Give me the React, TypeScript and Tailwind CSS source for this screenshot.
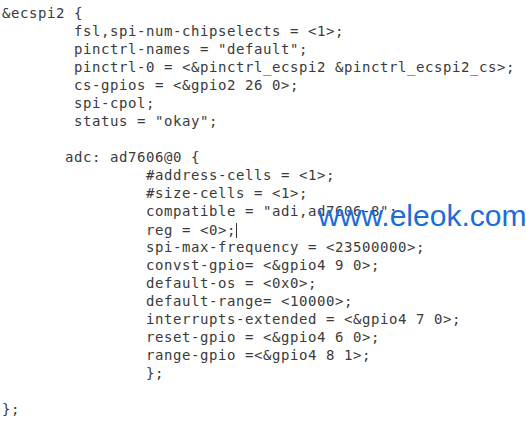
const lines: string[] = [
  "&ecspi2 {",
  "        fsl,spi-num-chipselects = <1>;",
  '        pinctrl-names = "default";',
  "        pinctrl-0 = <&pinctrl_ecspi2 &pinctrl_ecspi2_cs>;",
  "        cs-gpios = <&gpio2 26 0>;",
  "        spi-cpol;",
  '        status = "okay";',
  "",
  "       adc: ad7606@0 {",
  "                #address-cells = <1>;",
  "                #size-cells = <1>;",
  '                compatible = "adi,ad7606-8";',
  "                reg = <0>;",
  "                spi-max-frequency = <23500000>;",
  "                convst-gpio= <&gpio4 9 0>;",
  "                default-os = <0x0>;",
  "                default-range= <10000>;",
  "                interrupts-extended = <&gpio4 7 0>;",
  "                reset-gpio = <&gpio4 6 0>;",
  "                range-gpio =<&gpio4 8 1>;",
  "                };",
  "",
  "};",
];

export default function App() {
  return (
    <div className="relative h-[425px] w-[526px] overflow-hidden bg-white">
      <pre className="whitespace-pre pl-[2px] pt-[4px] font-['DejaVu_Sans_Mono',monospace] text-[14px] leading-[18px] tracking-[0.57px] text-[#3a3a3a]">
        {lines.map((l, i) => (
          <div key={i} className="h-[18px]">
            {l}
            {i === 12 && (
              <span className="inline-block h-[15px] w-px translate-y-[3px] bg-[#333]" />
            )}
          </div>
        ))}
      </pre>
      <div className="absolute left-[318px] top-[198px] font-['Liberation_Sans',Arial,sans-serif] text-[30px] leading-[36px] text-[#1a6ed8]">
        www.eleok.com
      </div>
    </div>
  );
}
